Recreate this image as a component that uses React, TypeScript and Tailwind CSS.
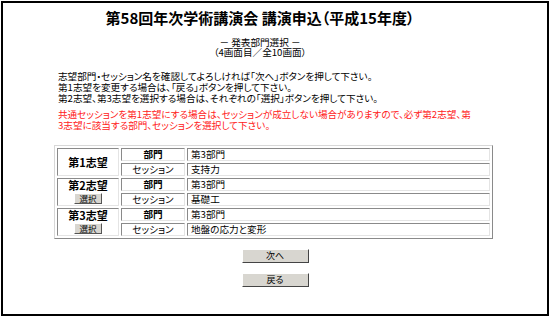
import React from "react";

const cellBorder =
  "border border-t-[#8a8a8a] border-l-[#8a8a8a] border-b-[#e4e4e4] border-r-[#e4e4e4]";

function SelectButton() {
  return (
    <button className="mt-[2px] px-[4px] h-[11px] leading-[9px] text-[8.5px] font-normal bg-[#d8d6d0] border border-t-white border-l-white border-b-[#555] border-r-[#555]">
      選択
    </button>
  );
}

const rows = [
  { label: "第1志望", select: false, bumon: "第3部門", session: "支持力" },
  { label: "第2志望", select: true, bumon: "第3部門", session: "基礎工" },
  { label: "第3志望", select: true, bumon: "第3部門", session: "地盤の応力と変形" },
];

export default function App() {
  return (
    <div
      className="w-[551px] h-[316px] bg-white pl-px pt-px text-black [font-feature-settings:'palt']"
      style={{ fontFamily: '"Noto Sans CJK JP", "Noto Sans", sans-serif' }}
    >
      <div className="w-[548px] h-[315px] border-2 border-black">
        {/* Heading block, centred a little left of the frame */}
        <div className="pr-[30px] text-center">
          <h1 className="mt-[5px] text-[15px] leading-[20px] font-bold">
            第58回年次学術講演会 講演申込（平成15年度）
          </h1>
          <div className="mt-[9px] text-[9.6px] leading-[10px]">－ 発表部門選択 －</div>
          <div className="text-[9.6px] leading-[10px]">（4画面目／全10画面）</div>
        </div>

        {/* Instructions */}
        <div className="mt-[14px] ml-[55px] w-[413px] text-[9.6px]">
          <p className="leading-[11px]">志望部門・セッション名を確認してよろしければ「次へ」ボタンを押して下さい。</p>
          <p className="leading-[11px]">第1志望を変更する場合は、「戻る」ボタンを押して下さい。</p>
          <p className="leading-[11px]">第2志望、第3志望を選択する場合は、それぞれの「選択」ボタンを押して下さい。</p>
          <p className="mt-[5px] leading-[11px] text-[#ff2020]">
            共通セッションを第1志望にする場合は、セッションが成立しない場合がありますので、必ず第2志望、第3志望に該当する部門、セッションを選択して下さい。
          </p>
        </div>

        {/* Selection table */}
        <table className="mt-[14px] ml-[51px] w-[439px] border-separate border-spacing-[2px] border border-[#d8d8d8] border-b-[#8a8a8a] border-r-[#8a8a8a] text-[9.6px] leading-[11px]">
          <tbody>
            {rows.map((r) => (
              <React.Fragment key={r.label}>
                <tr className="h-[13px]">
                  <td rowSpan={2} className={`${cellBorder} w-[62px] text-center align-middle font-bold text-[11px]`}>
                    <div>{r.label}</div>
                    {r.select && <SelectButton />}
                  </td>
                  <td className={`${cellBorder} w-[64px] text-center font-bold`}>部門</td>
                  <td className={`${cellBorder} pl-[3px]`}>{r.bumon}</td>
                </tr>
                <tr className="h-[13px]">
                  <td className={`${cellBorder} text-center`}>セッション</td>
                  <td className={`${cellBorder} pl-[3px]`}>{r.session}</td>
                </tr>
              </React.Fragment>
            ))}
          </tbody>
        </table>

        {/* Buttons */}
        <div className="mt-[10px] flex flex-col items-center gap-[10px]">
          <button className="w-[67px] h-[14px] text-[9px] leading-[12px] bg-[#d8d6d0] border border-t-white border-l-white border-b-[#444] border-r-[#444]">
            次へ
          </button>
          <button className="w-[67px] h-[14px] text-[9px] leading-[12px] bg-[#d8d6d0] border border-t-white border-l-white border-b-[#444] border-r-[#444]">
            戻る
          </button>
        </div>
      </div>
    </div>
  );
}
